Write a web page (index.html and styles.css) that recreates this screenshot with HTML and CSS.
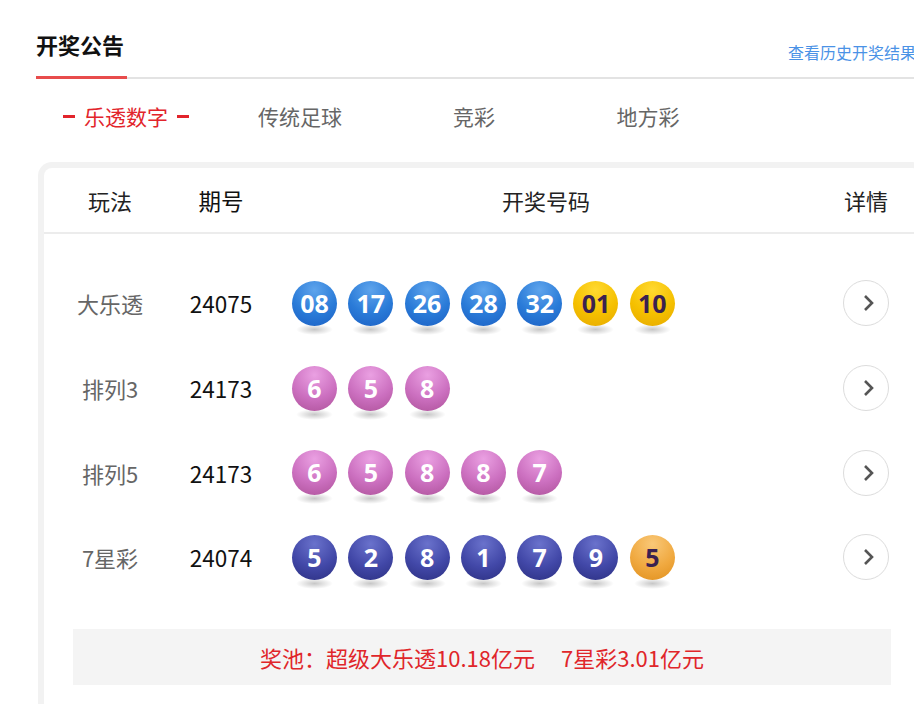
FILE: index.html
```html
<!DOCTYPE html>
<html lang="zh-CN">
<head>
  <meta charset="UTF-8" />
  <meta name="viewport" content="width=device-width, initial-scale=1.0" />
  <title>开奖公告</title>
  <link rel="stylesheet" href="styles.css">
</head>
<body>
  <div class="page">
    <!-- Title bar -->
    <div class="head">
      <h1 class="head-title">开奖公告</h1>
      <a class="head-link" href="#">查看历史开奖结果</a>
    </div>

    <!-- Category tabs -->
    <ul class="tabs">
      <li class="tab active"><span class="dash"></span>乐透数字<span class="dash"></span></li>
      <li class="tab">传统足球</li>
      <li class="tab">竞彩</li>
      <li class="tab">地方彩</li>
    </ul>

    <!-- Results table -->
    <div class="card">
      <div class="row row-head">
        <div class="col-name">玩法</div>
        <div class="col-issue">期号</div>
        <div class="col-balls">开奖号码</div>
        <div class="col-more">详情</div>
      </div>

      <div class="rows">
        <div class="row">
          <div class="col-name">大乐透</div>
          <div class="col-issue">24075</div>
          <div class="col-balls balls">
            <span class="ball blue">08</span>
            <span class="ball blue">17</span>
            <span class="ball blue">26</span>
            <span class="ball blue">28</span>
            <span class="ball blue">32</span>
            <span class="ball yellow">01</span>
            <span class="ball yellow">10</span>
          </div>
          <div class="col-more"><a class="more" href="#"><svg viewBox="0 0 24 24" width="24" height="24"><polyline points="9,5 16,12 9,19" /></svg></a></div>
        </div>

        <div class="row">
          <div class="col-name">排列3</div>
          <div class="col-issue">24173</div>
          <div class="col-balls balls">
            <span class="ball pink">6</span>
            <span class="ball pink">5</span>
            <span class="ball pink">8</span>
          </div>
          <div class="col-more"><a class="more" href="#"><svg viewBox="0 0 24 24" width="24" height="24"><polyline points="9,5 16,12 9,19" /></svg></a></div>
        </div>

        <div class="row">
          <div class="col-name">排列5</div>
          <div class="col-issue">24173</div>
          <div class="col-balls balls">
            <span class="ball pink">6</span>
            <span class="ball pink">5</span>
            <span class="ball pink">8</span>
            <span class="ball pink">8</span>
            <span class="ball pink">7</span>
          </div>
          <div class="col-more"><a class="more" href="#"><svg viewBox="0 0 24 24" width="24" height="24"><polyline points="9,5 16,12 9,19" /></svg></a></div>
        </div>

        <div class="row">
          <div class="col-name">7星彩</div>
          <div class="col-issue">24074</div>
          <div class="col-balls balls">
            <span class="ball navy">5</span>
            <span class="ball navy">2</span>
            <span class="ball navy">8</span>
            <span class="ball navy">1</span>
            <span class="ball navy">7</span>
            <span class="ball navy">9</span>
            <span class="ball orange">5</span>
          </div>
          <div class="col-more"><a class="more" href="#"><svg viewBox="0 0 24 24" width="24" height="24"><polyline points="9,5 16,12 9,19" /></svg></a></div>
        </div>
      </div>

      <!-- Jackpot summary -->
      <div class="pool">
        <span>奖池：超级大乐透10.18亿元</span>
        <span>7星彩3.01亿元</span>
      </div>
    </div>
  </div>
</body>
</html>
```

FILE: styles.css
```css
html, body {
  overflow: hidden;
}
body {
  margin: 0;
  padding: 0;
  background: #fff;
  font-family: "Noto Sans CJK SC", "Noto Sans", sans-serif;
  color: #222;
}
.page {
  width: 890px;
  padding-left: 36px;
}

/* title bar */
.head {
  display: flex;
  justify-content: space-between;
  align-items: flex-end;
  width: 880px;
  border-bottom: 2px solid #e3e3e3;
  padding-top: 28px;
}
.head-title {
  margin: 0 0 -2px;
  width: 91px;
  font-size: 22px;
  font-weight: bold;
  line-height: 32px;
  color: #111;
  padding-bottom: 16px;
  border-bottom: 3px solid #e84c4c;
}
.head-link {
  font-size: 16px;
  line-height: 20px;
  color: #4a92e6;
  text-decoration: none;
  white-space: nowrap;
  padding-bottom: 15px;
}

/* tabs */
.tabs {
  display: flex;
  list-style: none;
  margin: 22px 0 0;
  padding: 0 0 0 3px;
}
.tab {
  width: 174px;
  display: flex;
  justify-content: center;
  align-items: center;
  font-size: 21px;
  line-height: 30px;
  color: #666;
}
.tab.active {
  color: #e2242b;
}
.dash {
  width: 12px;
  height: 3px;
  background: #e2242b;
  margin: 0 9px;
}

/* card */
.card {
  margin: 31px 0 0 2px;
  width: 876px;
  border: 6px solid #f2f2f2;
  border-bottom: none;
  border-radius: 14px 14px 0 0;
  padding-bottom: 30px;
}
.row {
  display: grid;
  grid-template-columns: 132px 90px 560px 80px;
  align-items: center;
  height: 84.7px;
  font-size: 22px;
}
.row-head {
  height: 64px;
  border-bottom: 2px solid #ececec;
  color: #222;
}
.row-head .col-name {
  color: #222;
}
.row-head .col-balls {
  text-align: center;
  padding: 0;
}
.rows {
  padding-top: 27px;
}
.col-name {
  text-align: center;
  color: #666;
}
.col-issue {
  text-align: center;
  color: #111;
  font-size: 22.5px;
}
.col-more {
  display: flex;
  justify-content: center;
}

/* balls */
.balls {
  display: flex;
  gap: 11.3px;
  padding-left: 26px;
}
.ball {
  position: relative;
  width: 45px;
  height: 45px;
  border-radius: 50%;
  font-family: "Open Sans", "Noto Sans", sans-serif;
  font-weight: bold;
  font-size: 25px;
  line-height: 45px;
  text-align: center;
  color: #fff;
}
.ball::after {
  content: "";
  position: absolute;
  left: 4px;
  right: 4px;
  bottom: -9px;
  height: 11px;
  background: radial-gradient(ellipse at center, rgba(0, 0, 0, 0.22), rgba(0, 0, 0, 0) 70%);
  z-index: -1;
}
.blue {
  background: radial-gradient(circle at 50% 20%, #5ea4ec, #2a7bd8 55%, #1b60c4 100%);
}
.yellow {
  background: radial-gradient(circle at 50% 20%, #ffd930, #f5c000 55%, #e6a900 100%);
  color: #3a2150;
}
.pink {
  background: radial-gradient(circle at 50% 20%, #eaa0e2, #cc70c0 55%, #ad5199 100%);
}
.navy {
  background: radial-gradient(circle at 50% 20%, #6a72cc, #4248a8 55%, #2b2f80 100%);
}
.orange {
  background: radial-gradient(circle at 50% 20%, #f9c878, #f0a940 55%, #e08f1c 100%);
  color: #3a2150;
}

/* detail button */
.more {
  display: flex;
  align-items: center;
  justify-content: center;
  width: 44px;
  height: 44px;
  border: 1.5px solid #dcdcdc;
  border-radius: 50%;
}
.more svg {
  margin-left: 3px;
  fill: none;
  stroke: #555;
  stroke-width: 2.6;
}

/* jackpot */
.pool {
  margin: 29px 0 0 29px;
  width: 818px;
  height: 56px;
  background: #f4f4f4;
  display: flex;
  justify-content: center;
  align-items: center;
  gap: 26px;
  font-size: 22px;
  color: #e0262a;
}
```
